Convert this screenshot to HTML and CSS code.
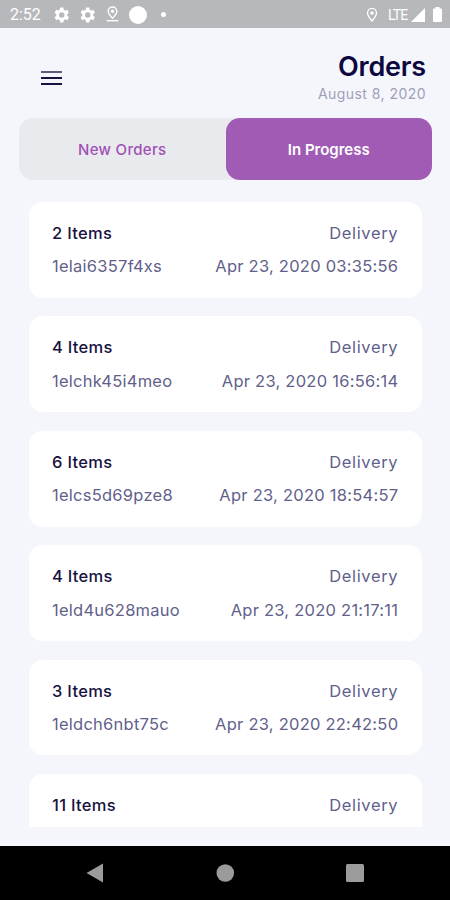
FILE: index.html
```html
<!DOCTYPE html>
<html lang="en">
<head>
<meta charset="utf-8">
<title>Orders</title>
<link rel="stylesheet" href="styles.css">
</head>
<body>
<div class="status">
  <span class="clock">2:52</span>
  <svg class="gear" viewBox="0 0 24 24"><path fill-rule="evenodd" d="M19.4 13a7.500 7.500 0 0 0 0-2l2.100-1.700-2-3.500-2.500 1a7 7 0 0 0-1.700-1L14.900 3h-4l-.4 2.800a7 7 0 0 0-1.700 1l-2.500-1-2 3.500L6.400 11a7.500 7.500 0 0 0 0 2l-2.100 1.700 2 3.500 2.500-1a7 7 0 0 0 1.700 1l.4 2.800h4l.4-2.800a7 7 0 0 0 1.700-1l2.500 1 2-3.500zM12.900 15.300a3.300 3.300 0 1 1 0-6.600 3.300 3.300 0 0 1 0 6.600z"/></svg>
  <svg class="gear" viewBox="0 0 24 24"><path fill-rule="evenodd" d="M19.4 13a7.500 7.500 0 0 0 0-2l2.100-1.700-2-3.500-2.500 1a7 7 0 0 0-1.700-1L14.900 3h-4l-.4 2.800a7 7 0 0 0-1.700 1l-2.500-1-2 3.500L6.400 11a7.500 7.500 0 0 0 0 2l-2.100 1.700 2 3.500 2.500-1a7 7 0 0 0 1.700 1l.4 2.800h4l.4-2.800a7 7 0 0 0 1.700-1l2.500 1 2-3.500zM12.900 15.300a3.300 3.300 0 1 1 0-6.600 3.300 3.300 0 0 1 0 6.600z"/></svg>
  <svg class="place" viewBox="0 0 12 16"><path class="line" d="M6 11.500C3.800 9 1.900 7.300 1.900 5a4.100 4.100 0 0 1 8.200 0c0 2.300-1.900 4-4.100 6.500z"/><circle cx="6" cy="5" r="1.600"/><path d="M.5 13.200h11v1.300H.5z"/></svg>
  <span class="disc"></span>
  <span class="dot"></span>
  <svg class="pin" viewBox="0 0 12 16"><path class="line" d="M6 14C3.300 10.600 1.500 8.400 1.500 5.900a4.500 4.500 0 0 1 9 0C10.500 8.400 8.700 10.600 6 14z"/><circle cx="6" cy="6" r="1.700"/></svg>
  <span class="lte">LTE</span>
  <svg class="signal" viewBox="0 0 14 14"><path d="M14 0v14H0z"/></svg>
  <svg class="battery" viewBox="0 0 9 15"><path d="M2.500 0h4v1.500H8q1 0 1 1V14q0 1-1 1H1q-1 0-1-1V2.500q0-1 1-1h1.500z"/></svg>
</div>
<header class="header">
  <div class="menu"><i></i><i></i><i></i></div>
  <div class="heading">
    <h1>Orders</h1>
    <p>August 8, 2020</p>
  </div>
</header>
<nav class="tabs">
  <span class="tab new">New Orders</span>
  <span class="tab active">In Progress</span>
</nav>
<main class="list">
  <article class="card"><div class="row"><b>2 Items</b><span class="type">Delivery</span></div><div class="row"><span>1elai6357f4xs</span><time>Apr 23, 2020 03:35:56</time></div></article>
  <article class="card"><div class="row"><b>4 Items</b><span class="type">Delivery</span></div><div class="row"><span>1elchk45i4meo</span><time>Apr 23, 2020 16:56:14</time></div></article>
  <article class="card"><div class="row"><b>6 Items</b><span class="type">Delivery</span></div><div class="row"><span>1elcs5d69pze8</span><time>Apr 23, 2020 18:54:57</time></div></article>
  <article class="card"><div class="row"><b>4 Items</b><span class="type">Delivery</span></div><div class="row"><span>1eld4u628mauo</span><time>Apr 23, 2020 21:17:11</time></div></article>
  <article class="card"><div class="row"><b>3 Items</b><span class="type">Delivery</span></div><div class="row"><span>1eldch6nbt75c</span><time>Apr 23, 2020 22:42:50</time></div></article>
  <article class="card"><div class="row"><b>11 Items</b><span class="type">Delivery</span></div></article>
</main>
<footer class="system">
  <svg viewBox="0 0 20 20"><path d="M.5 10 17 .5v19z"/></svg>
  <svg viewBox="0 0 20 20"><circle cx="10.300" cy="10" r="8.800"/></svg>
  <svg viewBox="0 0 20 20"><rect x="1" y="1" width="18" height="18" rx="1.500"/></svg>
</footer>
</body>
</html>
```
FILE: styles.css
```css
* { box-sizing: border-box; }
body {
  margin: 0;
  width: 450px;
  height: 900px;
  overflow: hidden;
  display: flex;
  flex-direction: column;
  background: #f4f6fb;
  font-family: Inter, "Liberation Sans", sans-serif;
  color: #625f8b;
}
.status {
  height: 28px;
  flex: none;
  display: flex;
  align-items: center;
  padding: 1px 8px 0 10px;
  background: #b7b8bc;
  color: #fff;
  font-family: Roboto, sans-serif;
}
.status svg { fill: #fff; flex: none; }
.status .line { fill: none; stroke: #fff; stroke-width: 1.300; }
.clock { width: 41px; font-size: 16px; }
.gear { width: 20px; height: 20px; margin-right: 5.500px; }
.place { width: 13px; height: 17px; margin-left: 4px; }
.disc { width: 18px; height: 18px; border-radius: 50%; background: #fff; margin-left: 10px; }
.dot { width: 5px; height: 5px; border-radius: 50%; background: #fff; margin-left: 14px; }
.pin { width: 12px; height: 16px; margin-left: auto; }
.lte { width: 23px; font-size: 14px; letter-spacing: -.9px; margin-left: 10px; }
.signal { width: 14px; height: 14px; }
.battery { width: 9px; height: 15px; margin-left: 8px; }
.header {
  height: 90px;
  flex: none;
  display: flex;
  justify-content: space-between;
  padding: 22px 24px 0 40.500px;
}
.menu { display: flex; flex-direction: column; gap: 3.500px; padding-top: 21px; }
.menu i { width: 21px; height: 2.300px; background: #17113f; }
.menu i:first-child { background: #5e5c7c; }
.heading { text-align: right; }
h1 {
  margin: 0;
  font-size: 27px;
  line-height: 34px;
  font-weight: 600;
  letter-spacing: -.2px;
  color: #0d0740;
}
.heading p { margin: 0; font-size: 14px; line-height: 20px; letter-spacing: .45px; color: #a09fba; }
.tabs {
  height: 62px;
  flex: none;
  display: flex;
  margin: 0 18px 0 19px;
  border-radius: 14px;
  background: #e9eaed;
}
.tab {
  flex: 1;
  display: flex;
  align-items: center;
  justify-content: center;
  border-radius: 14px;
  font-size: 15px;
  font-weight: 500;
  letter-spacing: .3px;
  color: #a050b7;
}
.tab.active { background: #a05cb5; color: #fff; font-weight: 600; letter-spacing: 0; }
.list {
  height: 625px;
  flex: none;
  overflow: hidden;
  margin: 22px 28px 0 29px;
  display: flex;
  flex-direction: column;
  gap: 18.500px;
}
.card {
  height: 95.900px;
  flex: none;
  padding: 14px 24px 0 23px;
  border-radius: 14px;
  background: #fff;
}
.row {
  display: flex;
  justify-content: space-between;
  height: 33.400px;
  line-height: 34px;
  font-size: 16.500px;
  letter-spacing: .25px;
}
.row time, .row .type { margin-right: -.3px; }
.row .type { letter-spacing: .65px; }
.row b { font-weight: 500; letter-spacing: .3px; color: #17123f; }
.system {
  height: 54px;
  flex: none;
  margin-top: auto;
  display: flex;
  justify-content: center;
  align-items: center;
  gap: 109.500px;
  background: #000;
}
.system svg { width: 20px; height: 20px; fill: #9b9b9b; }
```
